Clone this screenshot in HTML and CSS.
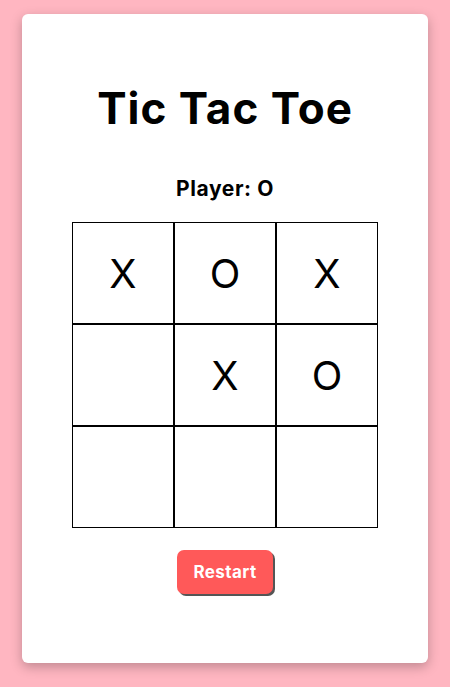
FILE: index.html
```html
<!DOCTYPE html>
<html lang="en">

<head>
    <meta charset="UTF-8">
    <meta name="viewport" content="width=device-width, initial-scale=1.0">
    <title>Tic Tac Toe</title>
    <link rel="stylesheet" href="styles.css">
</head>

<body>

    <div class="game-container">
        <h1>Tic Tac Toe</h1>
        <p class="status">Player: O</p>

        <!-- Board -->
        <div class="board">
            <div class="cell">X</div>
            <div class="cell">O</div>
            <div class="cell">X</div>
            <div class="cell"></div>
            <div class="cell">X</div>
            <div class="cell">O</div>
            <div class="cell"></div>
            <div class="cell"></div>
            <div class="cell"></div>
        </div>

        <button class="btn">Restart</button>
    </div>

</body>

</html>
```
FILE: styles.css
```css
* {
    margin: 0;
    padding: 0;
    box-sizing: border-box;
    font-family: 'Inter', 'Liberation Sans', sans-serif;
}

body {
    background-color: #ffb6c1;
    min-height: 100vh;
    padding: 14px 22px 25px;
    color: #000;
}

.game-container {
    background-color: #fff;
    border-radius: 6px;
    box-shadow: 0 4px 12px rgba(0, 0, 0, 0.25);
    padding: 68px 0 69px;
    display: flex;
    flex-direction: column;
    align-items: center;
}

h1 {
    font-size: 44px;
    font-weight: 700;
    line-height: 52px;
    letter-spacing: 1px;
}

.status {
    margin-top: 42px;
    font-size: 21px;
    font-weight: 700;
    line-height: 25px;
    letter-spacing: 0.6px;
}

.board {
    margin-top: 21px;
    display: grid;
    grid-template-columns: repeat(3, 102px);
    grid-template-rows: repeat(3, 102px);
}

.cell {
    border: 1px solid #000;
    display: flex;
    align-items: center;
    justify-content: center;
    font-size: 40px;
    font-weight: 400;
}

.btn {
    margin-top: 22px;
    background-color: #ff5959;
    color: #fff;
    border: none;
    border-radius: 7px;
    padding: 0 16px;
    height: 44px;
    font-size: 17px;
    font-weight: 700;
    letter-spacing: 0.4px;
    box-shadow: 2px 2px 0 #555;
    cursor: pointer;
}
```
